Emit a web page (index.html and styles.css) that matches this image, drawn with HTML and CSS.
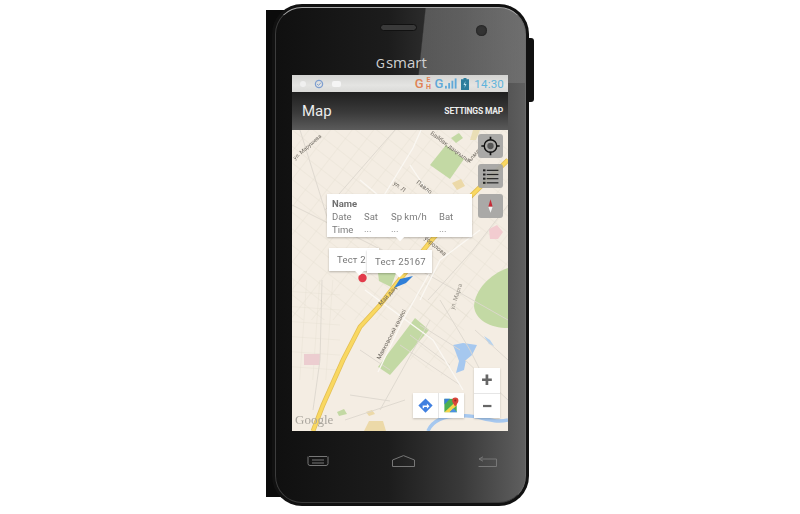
FILE: index.html
```html
<!DOCTYPE html>
<html lang="en">
<head>
<meta charset="utf-8">
<title>Map</title>
<link rel="stylesheet" href="styles.css">
</head>
<body>
<div class="stage">
  <div class="back-plate"></div>
  <div class="side-key"></div>
  <div class="phone">
    <div class="bezel">
      <div class="gloss"></div>
      <div class="top-area">
        <div class="speaker"></div>
        <div class="camera"></div>
        <div class="brand"><span class="brand-g">G</span>smart</div>
      </div>
      <div class="screen">
        <div class="status">
          <div class="status-left">
            <span class="dot-white"></span>
            <svg class="st-ico" viewBox="0 0 10 10"><circle cx="5" cy="5" r="3.600" fill="none" stroke="#7f9fd0" stroke-width="1.300"/><path d="M3 5l1.600 1.400L7 3.600" fill="none" stroke="#7f9fd0"/></svg>
            <span class="pill-white"></span>
          </div>
          <div class="status-right">
            <span class="net-orange">G</span>
            <span class="net-mini">E<br>H</span>
            <span class="net-blue">G</span>
            <svg class="bars" viewBox="0 0 13 11"><rect x="0" y="8" width="2" height="3"/><rect x="3.500" y="5" width="2" height="6"/><rect x="7" y="2.500" width="2" height="8.500"/><rect x="10.500" y="0" width="2" height="11"/></svg>
            <svg class="batt" viewBox="0 0 8 12"><path d="M2.500 0h3v1.300H8V12H0V1.300h2.500z" fill="#2d7d9c"/><path d="M4.500 3L2.500 7h1.500L3.500 10l2-4H4z" fill="#bfe6f2"/></svg>
            <span class="clock">14:30</span>
          </div>
        </div>
        <div class="actionbar">
          <span class="title">Map</span>
          <span class="action">SETTINGS MAP</span>
        </div>
        <div class="map">
          <svg class="map-art" viewBox="292 130 216 301" preserveAspectRatio="none">
            <defs>
              <pattern id="blocks" width="17" height="13" patternUnits="userSpaceOnUse" patternTransform="rotate(38)">
                <path d="M0 0h17M0 0v13" fill="none" stroke="#e3dccf" stroke-width=".7"/>
              </pattern>
              <pattern id="blocks2" width="13" height="15" patternUnits="userSpaceOnUse" patternTransform="rotate(4)">
                <path d="M0 0h13M0 0v15" fill="none" stroke="#e3dccf" stroke-width=".7"/>
              </pattern>
            </defs>
            <rect x="292" y="130" width="216" height="301" fill="#f4ede3"/>
            <rect x="292" y="130" width="216" height="190" fill="url(#blocks)"/>
            <path d="M292 280h48v100h-48z" fill="url(#blocks2)"/>
            <path d="M420 290l50 20-20 70-40-20z" fill="url(#blocks)"/>
            <g fill="#c3d9a4">
              <path d="M430 165l16-20 18 14-14 20z"/>
              <path d="M415 318l14 12-39 45-12-8z"/>
              <path d="M508 268c-18 6-33 22-34 38 1 14 16 22 34 22z"/>
              <path d="M377 265h22l-8 22-12-6z"/>
              <path d="M337 412l7-3 3 5-8 2z"/>
              <path d="M451 138l8-5 4 5-7 5z"/>
            </g>
            <path d="M473 130h7l-4 10h-6z" fill="#eadfb6"/>
            <path d="M452 183l9-4 4 7-8 4zM369 421h14l3 10h-22zM366 412l6-2 3 4-6 2z" fill="#ecd9a8"/>
            <path d="M304 354h16v11h-16z" fill="#eccdd0"/>
            <path d="M489 229l8-4 6 7-5 7h-8z" fill="#f2ccd0"/>
            <path d="M453 345l10-2 14 2-5 10-6 5-2 10-8 3 3-12z" fill="#a6c8ef"/>
            <path d="M484 336l6 4 4 6-5-2z" fill="#b4d2f0"/>
            <path d="M428 431c4-10 16-16 34-15 16-2 28 8 46 4" fill="none" stroke="#a6c8ef" stroke-width="3.500"/>
            <g fill="none" stroke="#dcd7ce" stroke-width=".9">
              <path d="M292 205l50 25 60 30 106 60"/>
              <path d="M300 130l28 90M395 130l-70 80M508 205l-35 45-45 50M440 300l30 50 20 40M430 320l-50 90M322 280l-2 80-7 50"/>
              <path d="M360 350l30 20M400 345l60 40M410 335l40 30M420 325l40 25M350 395l40 6M345 420l60-20M475 330l33 30M465 360l43 40"/>
            </g>
            <g fill="none" stroke="#fbf8f3" stroke-width="1.300">
              <path d="M375 210l38-62 8-18M440 210l-30-45M360 180l60 50"/>
              <path d="M365 290l68 50 30 50M420 300l20-40 40-30"/>
              <path d="M378 372l24-50 28-50"/>
            </g>
            <path d="M313 431l10-26 20-45 17-33 20-22 17-22 33-41 42-47 36-35" fill="none" stroke="#e3bf55" stroke-width="4.800"/>
            <path d="M313 431l10-26 20-45 17-33 20-22 17-22 33-41 42-47 36-35" fill="none" stroke="#f9d861" stroke-width="3.200"/>
            <path d="M394 288l6-9 13-3-7 7z" fill="#2f7fd8"/>
            <circle cx="362.500" cy="278" r="4.200" fill="#e23a4a"/>
            <g class="map-label">
              <text class="small" transform="translate(295 160) rotate(-41)">ул. Марушева</text>
              <text transform="translate(430 134) rotate(37)">Байбақ даңғылы</text>
              <text transform="translate(470 163) rotate(-50)">Алматы</text>
              <text transform="translate(393 184) rotate(38)">ул. Л</text>
              <text transform="translate(416 183) rotate(38)">Павло</text>
              <text transform="translate(424 239) rotate(40)">ўоролова</text>
              <text transform="translate(454 310) rotate(-72)" class="faint">ул. Марта</text>
              <text transform="translate(380 360) rotate(-62)">Маяковский көшесі</text>
              <text transform="translate(381 306) rotate(-48)">Май даң</text>
            </g>
            <text class="google" x="295" y="424">Google</text>
          </svg>

          <div class="map-btn locate">
            <svg viewBox="0 0 24 24"><circle cx="12" cy="12" r="7.500" fill="none" stroke="#111" stroke-width="1.700"/><circle cx="12" cy="12" r="3.800" fill="#555"/><path d="M12 1v4M12 19v4M1 12h4M19 12h4" stroke="#111" stroke-width="2"/></svg>
          </div>
          <div class="map-btn list">
            <svg viewBox="0 0 24 24"><g fill="#222"><rect x="3" y="4" width="3" height="2.400"/><rect x="3" y="9" width="3" height="2.400"/><rect x="3" y="14" width="3" height="2.400"/><rect x="3" y="19" width="3" height="2.400"/><rect x="7.500" y="4.500" width="14" height="1.400"/><rect x="7.500" y="9.500" width="14" height="1.400"/><rect x="7.500" y="14.500" width="14" height="1.400"/><rect x="7.500" y="19.500" width="14" height="1.400"/></g></svg>
          </div>
          <div class="map-btn compass">
            <svg viewBox="0 0 24 24"><path d="M12 4l2.600 9H9.400z" fill="#c62b36"/><path d="M12 20l2.600-7H9.400z" fill="#f4f4f4"/></svg>
          </div>

          <div class="info">
            <div class="info-name">Name</div>
            <div class="info-grid">
              <span>Date</span><span>Sat</span><span>Sp km/h</span><span>Bat</span>
              <span>Time</span><span class="val">...</span><span class="val">...</span><span class="val">...</span>
            </div>
          </div>
          <div class="callout back">Тест 2</div>
          <div class="callout front">Тест 25167</div>

          <div class="zoom-ctl">
            <div class="zoom-key plus">+</div>
            <div class="zoom-key">&#8722;</div>
          </div>
          <div class="nav-ctl">
            <div class="nav-key">
              <svg viewBox="0 0 20 20"><path d="M10 2.500l7.500 7.500-7.500 7.500L2.500 10z" fill="#3f7fe0"/><path d="M7 13v-3h4.500V8l2.700 2.800-2.700 2.700v-2H8.500V13z" fill="#fff"/></svg>
            </div>
            <div class="nav-key">
              <svg viewBox="0 0 20 20"><path d="M2.500 3h13v14h-13z" fill="#4caf50"/><path d="M2.500 17L15.500 5v5L8 17z" fill="#f6d44a"/><path d="M2.500 3h6L2.500 9z" fill="#3a7fd5"/><path d="M8 17l4-4 4 4z" fill="#4a90e2"/><path d="M14 1.500a3.300 3.300 0 0 1 3.300 3.300c0 2.400-3.300 6.200-3.300 6.200s-3.300-3.800-3.300-6.200A3.300 3.300 0 0 1 14 1.500z" fill="#d9453a"/><circle cx="14" cy="4.800" r="1.100" fill="#8e2a22"/></svg>
            </div>
          </div>
        </div>
      </div>
      <div class="softkeys">
        <svg class="soft menu" viewBox="0 0 22 11"><path d="M2 .5h18M1 .5v7q0 2 2 2h16q2 0 2-2v-7M5 4h12M5 7h12" fill="none" stroke="#777" stroke-width="1"/></svg>
        <svg class="soft home" viewBox="0 0 23 12"><path d="M.5 5L11.500.6 22.500 5v6.500H.5z" fill="none" stroke="#777" stroke-width="1"/></svg>
        <svg class="soft backk" viewBox="0 0 19 11"><path d="M5 .8L1 3l4 2.200M1 3h17.500v7.500H.5" fill="none" stroke="#777" stroke-width="1"/></svg>
      </div>
    </div>
  </div>
</div>
</body>
</html>
```
FILE: styles.css
```css
* { box-sizing: border-box; }
html, body { margin: 0; padding: 0; background: #fff; }
body { width: 800px; height: 514px; overflow: hidden; font-family: Roboto, "Liberation Sans", sans-serif; }

.stage { position: relative; width: 800px; height: 514px; padding: 4px 0 0 272px; }
.back-plate { position: absolute; left: 266px; top: 10px; width: 40px; height: 487px; background: #0b0b0b; }
.side-key { position: absolute; left: 520px; top: 38px; width: 14px; height: 64px; background: #111; border-radius: 0 3px 3px 0; }

.phone { position: relative; width: 257px; height: 502px; padding: 3px; background: #111; border-radius: 30px; }
.bezel {
  position: relative; width: 100%; height: 100%; padding: 0 16px;
  display: flex; flex-direction: column; overflow: hidden;
  border-radius: 27px; border: 1px solid #6a6a6a; border-top-color: #a8a8a8; border-left-color: #3c3c3c; border-bottom-color: #3c3c3c;
  background: linear-gradient(90deg, #101010 0%, #1c1c1c 45%, #3a3a3a 75%, #5f5f5f 100%);
}
.gloss {
  position: absolute; left: 0; top: 0; width: 100%; height: 75px;
  background: linear-gradient(96deg, rgba(0,0,0,0) 58%, rgba(150,150,150,.42) 58.500%, rgba(125,125,125,.5) 100%);
}
.top-area { position: relative; height: 67px; flex: none; }
.speaker { position: absolute; left: 88px; top: 16px; width: 37px; height: 7px; border-radius: 4px; background: #3a3a3a; border: 1px solid #111; }
.camera { position: absolute; left: 184px; top: 17px; width: 11px; height: 11px; border-radius: 50%; background: #333; box-shadow: inset 0 0 2px #111; }
.brand { position: absolute; left: 84px; top: 46px; font-size: 15px; line-height: 16px; color: #cfcfcf; font-family: "Open Sans", sans-serif; }
.brand-g { font-family: "DejaVu Sans", sans-serif; font-size: 11.500px; margin-right: 1px; }

.screen { position: relative; flex: none; width: 216px; height: 356px; display: flex; flex-direction: column; overflow: hidden; background: #fff; }
.status {
  flex: none; height: 17px; padding: 0 4px 0 8px; display: flex; align-items: center; justify-content: space-between;
  background: linear-gradient(#d3d3d1, #e4e4e2 60%, #dadad8);
}
.status-left, .status-right { display: flex; align-items: center; }
.status-left { gap: 8px; }
.dot-white { width: 6px; height: 6px; border-radius: 50%; background: #f0f0f0; }
.st-ico { width: 10px; height: 10px; }
.pill-white { width: 9px; height: 6px; border-radius: 2px; background: #f5f5f5; }
.net-orange { font-size: 13px; line-height: 14px; font-weight: 500; color: #e08356; }
.net-mini { font-size: 7px; line-height: 6.500px; font-weight: 700; color: #e08356; width: 10px; text-align: center; }
.net-blue { font-size: 13px; line-height: 14px; font-weight: 500; color: #5fa8d8; margin-left: 1px; }
.bars { width: 12px; height: 11px; margin: 0 4px 0 2px; fill: #5fa8d8; }
.batt { width: 8px; height: 12px; margin-right: 5px; }
.clock { font-size: 11.500px; line-height: 14px; color: #5fb4dc; letter-spacing: .2px; }

.actionbar {
  flex: none; height: 38px; padding: 0 5px 0 10px; display: flex; align-items: center; justify-content: space-between;
  background: linear-gradient(#1f1f1f, #3b3b3b 55%, #5b5b5b);
}
.title { font-size: 15px; color: #ececec; }
.action { font-size: 8.500px; font-weight: 700; letter-spacing: -.2px; color: #ececec; }

.map { position: relative; flex: 1; overflow: hidden; filter: blur(.35px); }
.map-art { display: block; width: 100%; height: 100%; }
.map-label text { font-family: Roboto, sans-serif; font-size: 6px; fill: #6f6a62; }
.map-label text.faint { fill: #9a958c; }
.map-label text.small { font-size: 5.500px; }
.google { font-family: "Liberation Serif", serif; font-size: 13px; fill: #a9a59d; }

.map-btn { position: absolute; left: 186px; width: 25px; height: 24px; padding: 2px; border-radius: 3px; background: rgba(165,165,163,.95); }
.map-btn svg { display: block; width: 100%; height: 100%; }
.locate { top: 4px; }
.list { top: 34px; }
.compass { top: 64px; }

.info {
  position: absolute; left: 35px; top: 64px; width: 145px; height: 43px; padding: 3px 5px;
  background: #fff; color: #7c7c7c; font-size: 9.500px; line-height: 13px; box-shadow: 0 1px 2px rgba(0,0,0,.25);
}
.info::after { content: ""; position: absolute; left: 70px; bottom: -3px; width: 6px; height: 6px; background: #fff; transform: rotate(45deg); }
.info-name { font-weight: 700; color: #707070; }
.info-grid { display: grid; grid-template-columns: 32px 27px 48px auto; }
.val { line-height: 12px; }

.callout {
  position: absolute; height: 23px; padding: 0 8px; background: #fff; color: #777; font-size: 9.500px; line-height: 23px;
  letter-spacing: .2px; white-space: nowrap; box-shadow: 0 1px 2px rgba(0,0,0,.25);
}
.callout::after { content: ""; position: absolute; width: 7px; height: 7px; bottom: -3px; background: #fff; transform: rotate(45deg); }
.callout.back { left: 37px; top: 118px; width: 50px; }
.callout.back::after { left: 27px; }
.callout.front { left: 75px; top: 120px; width: 65px; }
.callout.front::after { left: 29px; }

.zoom-ctl { position: absolute; left: 182px; top: 238px; width: 26px; height: 50px; display: flex; flex-direction: column; background: #fff; box-shadow: 0 1px 2px rgba(0,0,0,.2); }
.zoom-key { flex: 1; display: flex; align-items: center; justify-content: center; font-size: 20px; line-height: 20px; font-weight: 700; color: #666; }
.zoom-key.plus { border-bottom: 1px solid #e6e6e6; }
.nav-ctl { position: absolute; left: 121px; top: 263px; width: 51px; height: 25px; display: flex; background: #fff; box-shadow: 0 1px 2px rgba(0,0,0,.2); }
.nav-key { flex: 1; display: flex; align-items: center; justify-content: center; }
.nav-key + .nav-key { border-left: 1px solid #e6e6e6; }
.nav-key svg { width: 19px; height: 19px; }

.softkeys { flex: 1; padding: 0 12px 11px 15px; display: flex; align-items: center; justify-content: space-between; }
.soft.menu { width: 22px; height: 11px; }
.soft.home { width: 23px; height: 12px; }
.soft.backk { width: 19px; height: 11px; }
```
